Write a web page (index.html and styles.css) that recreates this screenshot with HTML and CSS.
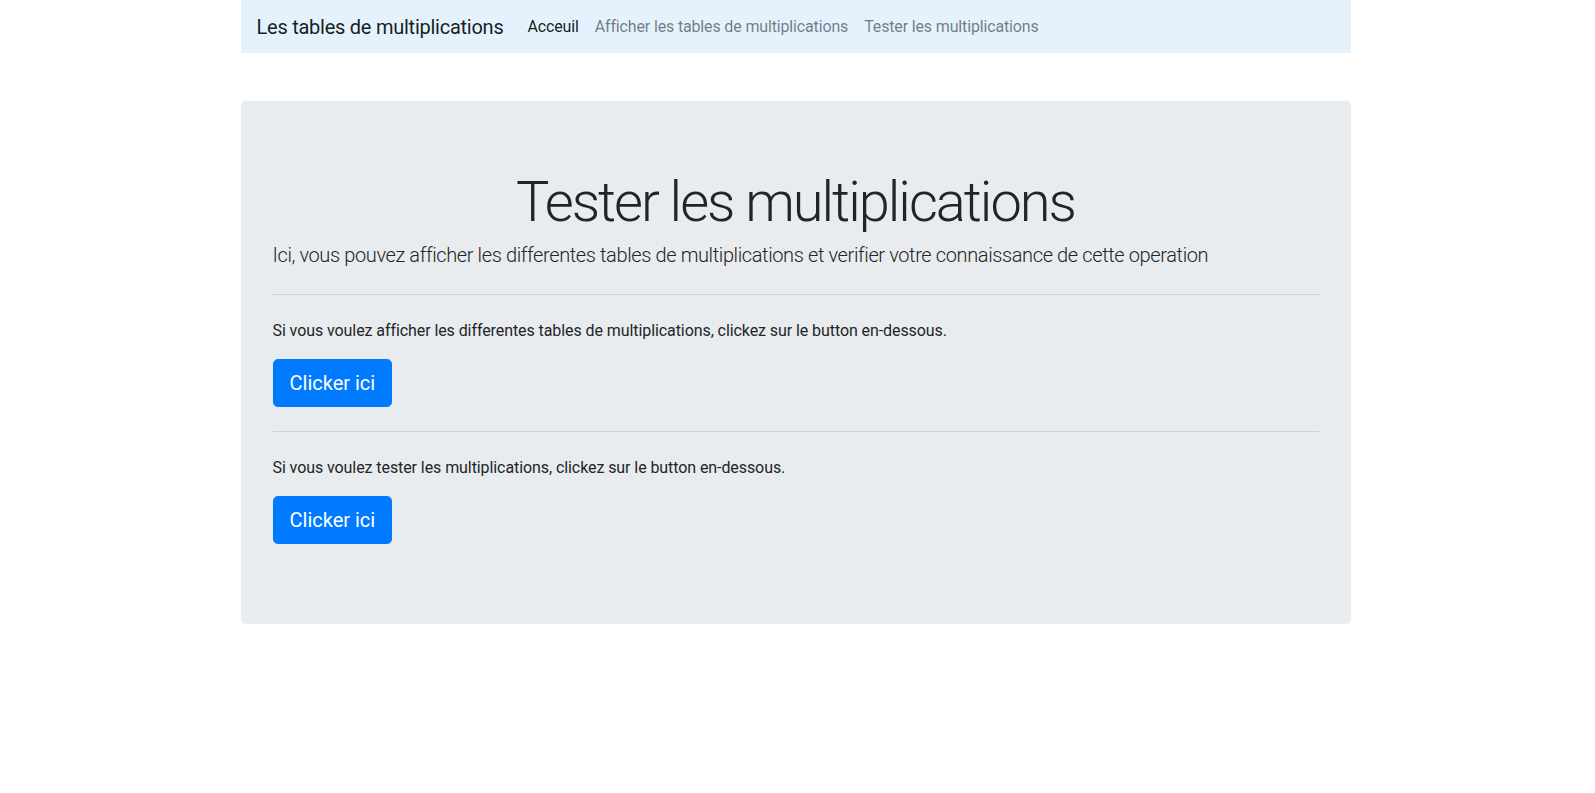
FILE: index.html
```html
<!DOCTYPE html>
<html lang="fr">
<head>
<meta charset="utf-8">
<title>Tester les multiplications</title>
<link rel="stylesheet" href="styles.css">
</head>
<body>
<div class="container">
  <nav class="navbar">
    <a class="brand" href="#">Les tables de multiplications</a>
    <ul class="nav">
      <li><a class="nav-link active" href="#">Acceuil</a></li>
      <li><a class="nav-link" href="#">Afficher les tables de multiplications</a></li>
      <li><a class="nav-link" href="#">Tester les multiplications</a></li>
    </ul>
  </nav>
  <main class="jumbotron">
    <h1 class="display">Tester les multiplications</h1>
    <p class="lead">Ici, vous pouvez afficher les differentes tables de multiplications et verifier votre connaissance de cette operation</p>
    <hr class="sep">
    <p class="text">Si vous voulez afficher les differentes tables de multiplications, clickez sur le button en-dessous.</p>
    <p class="lead"><a class="btn" href="#">Clicker ici</a></p>
    <hr class="sep">
    <p class="text">Si vous voulez tester les multiplications, clickez sur le button en-dessous.</p>
    <p class="lead"><a class="btn" href="#">Clicker ici</a></p>
  </main>
</div>
</body>
</html>
```
FILE: styles.css
```css
* { box-sizing: border-box; }
html, body { margin: 0; padding: 0; }
body {
  font-family: "Segoe UI", Roboto, "Open Sans", sans-serif;
  font-size: 16px;
  line-height: 1.5;
  color: #212529;
  background: #fff;
}
.container {
  width: 1110px;
  margin: 0 auto;
  position: relative;
  left: -2px;
}
.navbar {
  display: flex;
  align-items: center;
  height: 53px;
  padding: 0 16px;
  background: #e3f2fd;
}
.brand {
  font-size: 20px;
  line-height: 30px;
  letter-spacing: -0.25px;
  color: rgba(0,0,0,.9);
  text-decoration: none;
  margin-right: 16px;
}
.nav {
  display: flex;
  list-style: none;
  margin: 0;
  padding: 0;
}
.nav-link {
  display: block;
  padding: 8px 8px;
  color: rgba(0,0,0,.5);
  text-decoration: none;
  font-size: 16px;
  letter-spacing: -0.15px;
}
.nav-link.active { color: rgba(0,0,0,.9); }
.jumbotron {
  display: block;
  margin-top: 48px;
  background: #e9ecef;
  border-radius: 4.8px;
  padding: 64px 32px;
}
.display {
  font-size: 56px;
  font-weight: 300;
  line-height: 1.2;
  letter-spacing: -2px;
  text-align: center;
  margin: 0 0 4px;
  padding-top: 4px;
}
.lead {
  font-size: 20px;
  font-weight: 300;
  letter-spacing: -0.38px;
  margin: 0 0 16px;
}
.text {
  margin: 0 0 16px;
  letter-spacing: -0.08px;
}
.sep {
  margin: 24px 0;
  border: 0;
  border-top: 1px solid rgba(0,0,0,.1);
}
.btn {
  display: inline-block;
  font-size: 20px;
  font-weight: 400;
  line-height: 1.5;
  letter-spacing: 0;
  padding: 8px 16px;
  color: #fff;
  background: #007bff;
  border: 1px solid #007bff;
  border-radius: 4.8px;
  text-decoration: none;
  vertical-align: middle;
}
```
